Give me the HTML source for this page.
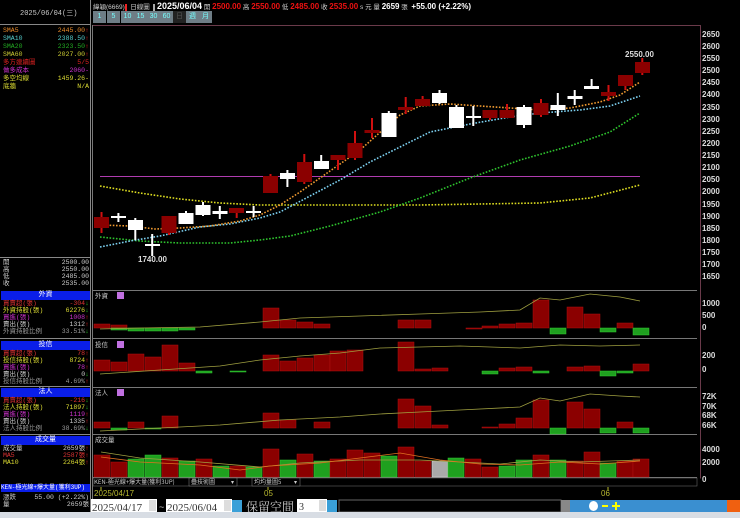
<!DOCTYPE html>
<html><head><meta charset="utf-8"><style>
*{margin:0;padding:0;box-sizing:border-box}
body{width:740px;height:518px;background:#000;overflow:hidden;position:relative;font-family:"Liberation Mono","Noto Sans CJK TC",monospace;font-size:7px;color:#ddd}
.a{position:absolute}
.row{position:absolute;left:3px;width:86px;height:8px;line-height:8px;font-size:6.5px}
.row b{position:absolute;right:0;font-weight:normal}
.hd{position:absolute;left:1px;width:89px;height:9px;background:#0a1ee8;color:#fff;text-align:center;font-size:7px;line-height:9px}
.btn{position:absolute;top:11px;height:12px;width:13px;background:#6e7d86;color:#7ff;font-size:7px;text-align:center;line-height:12px;font-family:"Liberation Sans",sans-serif}
</style></head><body>
<!-- left panel -->
<div class="a" style="left:0;top:0;width:91px;height:518px;border-right:1px solid #888"></div>
<div class="a" style="left:0;top:24px;width:91px;height:1px;background:#888"></div>
<div class="a" style="left:20px;top:8px;font-size:7px;color:#ccc">2025/06/04(三)</div>
<div class="row" style="top:27px;color:#e88a2a">SMA5<b>2445.00<span style="color:#f22">↑</span></b></div>
<div class="row" style="top:35px;color:#5cc">SMA10<b>2388.50<span style="color:#f22">↑</span></b></div>
<div class="row" style="top:43px;color:#2a2">SMA20<b>2323.50<span style="color:#f22">↑</span></b></div>
<div class="row" style="top:51px;color:#cc3">SMA60<b>2027.00<span style="color:#f22">↑</span></b></div>
<div class="row" style="top:59px;color:#d22">多方連續圖<b>5/5</b></div>
<div class="row" style="top:67px;color:#c3c">做多成本<b>2060-</b></div>
<div class="row" style="top:75px;color:#dd3">多空均線<b>1459.26-</b></div>
<div class="row" style="top:83px;color:#dd3">底牆<b>N/A</b></div>
<div class="a" style="left:0;top:257px;width:91px;height:1px;background:#888"></div>
<div class="row" style="top:259px;color:#ccc">開<b>2500.00</b></div>
<div class="row" style="top:266px;color:#ccc">高<b>2550.00</b></div>
<div class="row" style="top:273px;color:#ccc">低<b>2485.00</b></div>
<div class="row" style="top:280px;color:#ccc">收<b>2535.00</b></div>
<div class="hd" style="top:291px">外資</div>
<div class="row" style="top:300px;color:#d33">買賣超(張)<b>-304<span style="color:#2c2">↓</span></b></div>
<div class="row" style="top:307px;color:#dd3">外資持股(張)<b>62276<span style="color:#2c2">↓</span></b></div>
<div class="row" style="top:314px;color:#c3c">買進(張)<b>1008<span style="color:#f22">↑</span></b></div>
<div class="row" style="top:321px;color:#ccc">賣出(張)<b>1312<span style="color:#f22">↑</span></b></div>
<div class="row" style="top:328px;color:#999">外資持股比例<b>33.51%<span style="color:#2c2">↓</span></b></div>
<div class="a" style="left:0;top:338px;width:91px;height:1px;background:#888"></div>
<div class="hd" style="top:341px">投信</div>
<div class="row" style="top:350px;color:#d33">買賣超(張)<b>78<span style="color:#f22">↑</span></b></div>
<div class="row" style="top:357px;color:#dd3">投信持股(張)<b>8724<span style="color:#f22">↑</span></b></div>
<div class="row" style="top:364px;color:#c3c">買進(張)<b>78<span style="color:#f22">↑</span></b></div>
<div class="row" style="top:371px;color:#ccc">賣出(張)<b>0<span style="color:#2c2">↓</span></b></div>
<div class="row" style="top:378px;color:#999">投信持股比例<b>4.69%<span style="color:#f22">↑</span></b></div>
<div class="a" style="left:0;top:386px;width:91px;height:1px;background:#888"></div>
<div class="hd" style="top:388px">法人</div>
<div class="row" style="top:397px;color:#d33">買賣超(張)<b>-216<span style="color:#2c2">↓</span></b></div>
<div class="row" style="top:404px;color:#dd3">法人持股(張)<b>71897<span style="color:#2c2">↓</span></b></div>
<div class="row" style="top:411px;color:#c3c">買進(張)<b>1119<span style="color:#f22">↑</span></b></div>
<div class="row" style="top:418px;color:#ccc">賣出(張)<b>1335<span style="color:#f22">↑</span></b></div>
<div class="row" style="top:425px;color:#999">法人持股比例<b>38.69%<span style="color:#2c2">↓</span></b></div>
<div class="a" style="left:0;top:434px;width:91px;height:1px;background:#888"></div>
<div class="hd" style="top:436px">成交量</div>
<div class="row" style="top:445px;color:#ccc">成交量<b>2659張<span style="color:#f22">↑</span></b></div>
<div class="row" style="top:452px;color:#d33">MA5<b>2587張<span style="color:#f22">↑</span></b></div>
<div class="row" style="top:459px;color:#dd3">MA10<b>2264張<span style="color:#f22">↑</span></b></div>
<div class="hd" style="top:484px;height:8px;line-height:8px;font-size:6px;text-align:left">KEN-極光線+爆大量(獲利3UP)</div>
<div class="row" style="top:494px;color:#ccc">漲跌<b>55.00 (+2.22%)</b></div>
<div class="row" style="top:501px;color:#ccc">量<b>2659張</b></div>

<!-- top bar -->
<div class="a" style="left:93px;top:1px;font-size:6.5px;color:#ccc;white-space:nowrap;font-family:'Liberation Sans','Noto Sans CJK TC',sans-serif">緯穎(6669)<span style="background:#e22;color:#fff">&nbsp;</span>&nbsp;&nbsp;日線圖&nbsp;&nbsp;<span style="background:#aaa">&nbsp;</span> <b style="font-size:9px;color:#fff">2025/06/04</b> 開 <b style="font-size:8px;color:#e11">2500.00</b> 高 <b style="font-size:8px;color:#e11">2550.00</b> 低 <b style="font-size:8px;color:#e11">2485.00</b> 收 <b style="font-size:8px;color:#e11">2535.00</b> s 元 量 <b style="font-size:8px;color:#fff">2659</b> 張 &nbsp;<b style="font-size:8px;color:#fff">+55.00 (+2.22%)</b></div>
<div class="btn" style="left:93px">1</div><div class="btn" style="left:107px">5</div><div class="btn" style="left:121px">10</div><div class="btn" style="left:134px">15</div><div class="btn" style="left:147px">30</div><div class="btn" style="left:160px">60</div><div class="btn" style="left:173px;background:#222;color:#555">日</div><div class="btn" style="left:186px">週</div><div class="btn" style="left:199px">月</div>

<svg class="a" style="left:0;top:0" width="740" height="518" font-family="Liberation Sans,sans-serif">
<!-- frames -->
<g fill="none" stroke="#777" stroke-width="1">
<path d="M92.5 25.5H700.5V478.5" stroke="#6a3a4a"/>
<path d="M92.5 290.5H697M92.5 338.5H697M92.5 387.5H697M92.5 434.5H697M92.5 477.5H697"/>
<path d="M92.5 25V518"/>
</g>
<!-- y labels -->
<g fill="#ddd" font-size="8" font-weight="bold">
<text x="702" y="37">2650</text><text x="702" y="49">2600</text><text x="702" y="61">2550</text><text x="702" y="73">2500</text><text x="702" y="85">2450</text><text x="702" y="97">2400</text><text x="702" y="110">2350</text><text x="702" y="122">2300</text><text x="702" y="134">2250</text><text x="702" y="146">2200</text><text x="702" y="158">2150</text><text x="702" y="170">2100</text><text x="702" y="182">2050</text><text x="702" y="194">2000</text><text x="702" y="207">1950</text><text x="702" y="219">1900</text><text x="702" y="231">1850</text><text x="702" y="243">1800</text><text x="702" y="255">1750</text><text x="702" y="267">1700</text><text x="702" y="279">1650</text>
<text x="702" y="306">1000</text><text x="702" y="318">500</text><text x="702" y="330">0</text>
<text x="702" y="358">200</text><text x="702" y="372">0</text>
<text x="702" y="399">72K</text><text x="702" y="409">70K</text><text x="702" y="418">68K</text><text x="702" y="428">66K</text>
<text x="702" y="452">4000</text><text x="702" y="465">2000</text><text x="702" y="482">0</text>
<text x="625" y="57">2550.00</text><text x="138" y="262">1740.00</text>
</g>
<!-- horizontal magenta -->
<line x1="100" y1="176.5" x2="640" y2="176.5" stroke="#b03cb0" stroke-width="1"/>
<!-- MAs -->
<g fill="none" stroke-width="1.6" stroke-dasharray="1.6 1.6">
<polyline stroke="#dddd20" points="100,186 140,193 180,199 220,203 260,205 320,205 380,205 420,205 480,204 540,203 590,198 640,185"/>
<polyline stroke="#2ec42e" points="100,237 140,241 180,243 230,243 260,240 290,236 330,226 380,212 420,198 470,178 520,160 570,146 610,132 640,113"/>
<polyline stroke="#7cd0f0" points="100,247 130,241 160,236 200,227 230,224 260,218 280,212 310,196 340,180 370,162 400,147 430,132 470,124 510,117 540,113 580,110 610,106 640,96"/>
<polyline stroke="#f09a30" points="100,225 130,226 155,229 180,228 210,226 240,221 260,215 280,205 300,192 330,171 360,150 385,128 400,115 420,106 450,104 480,106 510,108 540,110 570,108 600,102 620,95 640,82"/>
</g>
<!-- candles -->
<g stroke-width="2">
<g stroke="#d01010" fill="#8b0000">
<line x1="101.5" y1="212" x2="101.5" y2="233"/><rect x="94" y="217" width="15" height="11" stroke="none"/>
<line x1="169" y1="216" x2="169" y2="235"/><rect x="161.5" y="216" width="15" height="17" stroke="none"/>
<line x1="236.7" y1="208" x2="236.7" y2="218"/><rect x="229" y="208" width="15" height="5" stroke="none"/>
<line x1="270.5" y1="174" x2="270.5" y2="193"/><rect x="263" y="176" width="15" height="17" stroke="none"/>
<line x1="304.3" y1="154" x2="304.3" y2="184"/><rect x="297" y="162" width="15" height="20" stroke="none"/>
<line x1="338" y1="155" x2="338" y2="170"/><rect x="330.5" y="155" width="15" height="5" stroke="none"/>
<line x1="355" y1="131" x2="355" y2="160"/><rect x="347.5" y="143" width="15" height="15" stroke="none"/>
<line x1="372" y1="118" x2="372" y2="138"/><rect x="364.5" y="130" width="15" height="3" stroke="none"/>
<line x1="405.7" y1="97" x2="405.7" y2="114"/><rect x="398" y="107" width="15" height="3" stroke="none"/>
<line x1="422.6" y1="96" x2="422.6" y2="106"/><rect x="415" y="99" width="15" height="7" stroke="none"/>
<line x1="490" y1="110" x2="490" y2="120"/><rect x="482.5" y="110" width="15" height="8" stroke="none"/>
<line x1="507" y1="104" x2="507" y2="118"/><rect x="499.5" y="110" width="15" height="8" stroke="none"/>
<line x1="541" y1="99" x2="541" y2="117"/><rect x="533.5" y="103" width="15" height="12" stroke="none"/>
<line x1="608.5" y1="85" x2="608.5" y2="101"/><rect x="601" y="92" width="15" height="4" stroke="none"/>
<line x1="625.4" y1="75" x2="625.4" y2="90"/><rect x="618" y="75" width="15" height="11" stroke="none"/>
<line x1="642.3" y1="58" x2="642.3" y2="75"/><rect x="635" y="62" width="15" height="11" stroke="none"/>
</g>
<g stroke="#fff" fill="#fff">
<line x1="118.4" y1="213" x2="118.4" y2="222"/><rect x="111" y="216" width="15" height="2" stroke="none"/>
<line x1="135.3" y1="218" x2="135.3" y2="240"/><rect x="128" y="220" width="15" height="10" stroke="none"/>
<line x1="152.2" y1="234" x2="152.2" y2="256"/><rect x="145" y="244" width="15" height="2" stroke="none"/>
<line x1="186" y1="211" x2="186" y2="224"/><rect x="178.5" y="213" width="15" height="11" stroke="none"/>
<line x1="203" y1="202" x2="203" y2="216"/><rect x="195.5" y="205" width="15" height="10" stroke="none"/>
<line x1="219.8" y1="206" x2="219.8" y2="219"/><rect x="212.5" y="211" width="15" height="3" stroke="none"/>
<line x1="253.6" y1="206" x2="253.6" y2="217"/><rect x="246" y="211" width="15" height="2" stroke="none"/>
<line x1="287.4" y1="170" x2="287.4" y2="187"/><rect x="280" y="173" width="15" height="6" stroke="none"/>
<line x1="321.2" y1="155" x2="321.2" y2="169"/><rect x="314" y="161" width="15" height="8" stroke="none"/>
<line x1="388.8" y1="111" x2="388.8" y2="137"/><rect x="381.5" y="113" width="15" height="24" stroke="none"/>
<line x1="439.5" y1="90" x2="439.5" y2="104"/><rect x="432" y="93" width="15" height="10" stroke="none"/>
<line x1="456.4" y1="105" x2="456.4" y2="128"/><rect x="449" y="107" width="15" height="21" stroke="none"/>
<line x1="473.3" y1="106" x2="473.3" y2="126"/><rect x="466" y="116" width="15" height="2" stroke="none"/>
<line x1="524" y1="105" x2="524" y2="128"/><rect x="516.5" y="107" width="15" height="18" stroke="none"/>
<line x1="557.8" y1="93" x2="557.8" y2="116"/><rect x="550.5" y="105" width="15" height="5" stroke="none"/>
<line x1="574.7" y1="90" x2="574.7" y2="105"/><rect x="567.5" y="96" width="15" height="3" stroke="none"/>
<line x1="591.6" y1="79" x2="591.6" y2="88"/><rect x="584" y="86" width="15" height="3" stroke="none"/>
</g>
</g>
<!-- sub panel titles -->
<g fill="#ccc" font-size="6.5" font-family="Noto Sans CJK TC,sans-serif">
<text x="95" y="298">外資</text><text x="95" y="347">投信</text><text x="95" y="395">法人</text><text x="95" y="442">成交量</text>
</g>
<rect x="117" y="292" width="7" height="7" fill="#c070e0"/><rect x="117" y="341" width="7" height="7" fill="#c070e0"/><rect x="117" y="389" width="7" height="7" fill="#c070e0"/>
<!-- foreign bars zero 328 -->
<g fill="#8b0000" stroke="#b01010" stroke-width=".5">
<rect x="94" y="324" width="16" height="4"/><rect x="111" y="325" width="16" height="3"/><rect x="263" y="308" width="16" height="20"/><rect x="280" y="320" width="16" height="8"/><rect x="297" y="322" width="16" height="6"/><rect x="314" y="324" width="16" height="4"/><rect x="398" y="320" width="16" height="8"/><rect x="415" y="320" width="16" height="8"/><rect x="466" y="328" width="16" height="1"/><rect x="482" y="326" width="16" height="2"/><rect x="499" y="324" width="16" height="4"/><rect x="516" y="323" width="16" height="5"/><rect x="533" y="300" width="16" height="28"/><rect x="567" y="307" width="16" height="21"/><rect x="584" y="314" width="16" height="14"/><rect x="617" y="323" width="16" height="5"/>
</g>
<g fill="#1fa01f" stroke="#3c3" stroke-width=".5">
<rect x="111" y="328" width="16" height="2"/><rect x="128" y="328" width="16" height="3"/><rect x="145" y="328" width="16" height="3"/><rect x="162" y="328" width="16" height="3"/><rect x="179" y="328" width="16" height="2"/><rect x="550" y="328" width="16" height="6"/><rect x="600" y="328" width="16" height="4"/><rect x="633" y="328" width="16" height="7"/>
</g>
<polyline fill="none" stroke="#a0a040" stroke-width=".8" points="100,329 140,328 200,327 260,322 300,318 360,316 420,314 480,312 520,310 540,298 560,300 590,294 620,297 640,301"/>
<!-- invest trust zero 371 -->
<g fill="#8b0000" stroke="#b01010" stroke-width=".5">
<rect x="94" y="360" width="16" height="11"/><rect x="111" y="362" width="16" height="9"/><rect x="128" y="354" width="16" height="17"/><rect x="145" y="357" width="16" height="14"/><rect x="162" y="345" width="16" height="26"/><rect x="179" y="363" width="16" height="8"/><rect x="263" y="355" width="16" height="16"/><rect x="280" y="361" width="16" height="10"/><rect x="297" y="358" width="16" height="13"/><rect x="314" y="355" width="16" height="16"/><rect x="330" y="351" width="16" height="20"/><rect x="347" y="350" width="16" height="21"/><rect x="398" y="342" width="16" height="29"/><rect x="415" y="369" width="16" height="2"/><rect x="432" y="368" width="16" height="3"/><rect x="499" y="368" width="16" height="3"/><rect x="516" y="367" width="16" height="4"/><rect x="567" y="367" width="16" height="4"/><rect x="584" y="366" width="16" height="5"/><rect x="633" y="364" width="16" height="7"/>
</g>
<g fill="#1fa01f" stroke="#3c3" stroke-width=".5">
<rect x="196" y="371" width="16" height="2"/><rect x="230" y="371" width="16" height="1"/><rect x="499" y="371" width="0" height="0"/><rect x="482" y="371" width="16" height="3"/><rect x="499" y="371" width="16" height="0"/><rect x="533" y="371" width="16" height="2"/><rect x="600" y="371" width="16" height="5"/><rect x="617" y="371" width="16" height="2"/>
</g>
<polyline fill="none" stroke="#a0a040" stroke-width=".8" points="100,374 160,370 220,366 260,360 300,356 340,353 380,348 420,347 460,346 520,348 560,345 600,346 640,345"/>
<!-- institutions zero 428 -->
<g fill="#8b0000" stroke="#b01010" stroke-width=".5">
<rect x="94" y="422" width="16" height="6"/><rect x="128" y="422" width="16" height="6"/><rect x="162" y="416" width="16" height="12"/><rect x="263" y="413" width="16" height="15"/><rect x="280" y="420" width="16" height="8"/><rect x="314" y="422" width="16" height="6"/><rect x="398" y="399" width="16" height="29"/><rect x="415" y="406" width="16" height="22"/><rect x="432" y="425" width="16" height="3"/><rect x="482" y="427" width="16" height="1"/><rect x="499" y="424" width="16" height="4"/><rect x="516" y="418" width="16" height="10"/><rect x="533" y="400" width="16" height="28"/><rect x="567" y="402" width="16" height="26"/><rect x="584" y="409" width="16" height="19"/><rect x="617" y="422" width="16" height="6"/>
</g>
<g fill="#1fa01f" stroke="#3c3" stroke-width=".5">
<rect x="111" y="428" width="16" height="2"/><rect x="145" y="428" width="16" height="1"/><rect x="550" y="428" width="16" height="6"/><rect x="600" y="428" width="16" height="5"/><rect x="633" y="428" width="16" height="5"/>
</g>
<polyline fill="none" stroke="#a0a040" stroke-width=".8" points="100,431 160,428 220,425 280,420 340,417 380,414 420,412 460,410 520,407 540,398 560,401 590,394 620,396 640,397"/>
<!-- volume base 477 -->
<g stroke-width=".5">
<rect x="94" y="455" width="16" height="22" fill="#8b0000" stroke="#b01010"/>
<rect x="111" y="462" width="16" height="15" fill="#8b0000" stroke="#b01010"/>
<rect x="128" y="459" width="16" height="18" fill="#1fa01f" stroke="#3c3"/>
<rect x="145" y="455" width="16" height="22" fill="#1fa01f" stroke="#3c3"/>
<rect x="162" y="458" width="16" height="19" fill="#8b0000" stroke="#b01010"/>
<rect x="179" y="461" width="16" height="16" fill="#1fa01f" stroke="#3c3"/>
<rect x="196" y="459" width="16" height="18" fill="#8b0000" stroke="#b01010"/>
<rect x="213" y="466" width="16" height="11" fill="#1fa01f" stroke="#3c3"/>
<rect x="230" y="466" width="16" height="11" fill="#8b0000" stroke="#b01010"/>
<rect x="246" y="467" width="16" height="10" fill="#1fa01f" stroke="#3c3"/>
<rect x="263" y="449" width="16" height="28" fill="#8b0000" stroke="#b01010"/>
<rect x="280" y="460" width="16" height="17" fill="#1fa01f" stroke="#3c3"/>
<rect x="297" y="454" width="16" height="23" fill="#8b0000" stroke="#b01010"/>
<rect x="314" y="461" width="16" height="16" fill="#1fa01f" stroke="#3c3"/>
<rect x="330" y="459" width="16" height="18" fill="#8b0000" stroke="#b01010"/>
<rect x="347" y="450" width="16" height="27" fill="#8b0000" stroke="#b01010"/>
<rect x="364" y="453" width="16" height="24" fill="#8b0000" stroke="#b01010"/>
<rect x="381" y="456" width="16" height="21" fill="#1fa01f" stroke="#3c3"/>
<rect x="398" y="447" width="16" height="30" fill="#8b0000" stroke="#b01010"/>
<rect x="415" y="461" width="16" height="16" fill="#8b0000" stroke="#b01010"/>
<rect x="432" y="461" width="16" height="16" fill="#aaa" stroke="#ddd"/>
<rect x="448" y="458" width="16" height="19" fill="#1fa01f" stroke="#3c3"/>
<rect x="465" y="459" width="16" height="18" fill="#8b0000" stroke="#b01010"/>
<rect x="482" y="467" width="16" height="10" fill="#8b0000" stroke="#b01010"/>
<rect x="499" y="466" width="16" height="11" fill="#1fa01f" stroke="#3c3"/>
<rect x="516" y="460" width="16" height="17" fill="#1fa01f" stroke="#3c3"/>
<rect x="533" y="455" width="16" height="22" fill="#8b0000" stroke="#b01010"/>
<rect x="550" y="460" width="16" height="17" fill="#1fa01f" stroke="#3c3"/>
<rect x="567" y="461" width="16" height="16" fill="#8b0000" stroke="#b01010"/>
<rect x="584" y="452" width="16" height="25" fill="#8b0000" stroke="#b01010"/>
<rect x="600" y="463" width="16" height="14" fill="#1fa01f" stroke="#3c3"/>
<rect x="617" y="461" width="16" height="16" fill="#8b0000" stroke="#b01010"/>
<rect x="633" y="459" width="16" height="18" fill="#8b0000" stroke="#b01010"/>
</g>
<polyline fill="none" stroke="#a0a040" stroke-width=".8" points="101,452 140,458 200,462 260,467 300,463 360,460 420,460 460,462 500,464 540,460 580,462 640,460"/>
<polyline fill="none" stroke="#e07020" stroke-width=".8" points="101,457 140,462 200,465 240,470 270,466 320,463 360,458 400,453 440,460 480,464 520,465 560,462 600,464 640,461"/>
<!-- indicator row -->
<rect x="93" y="478" width="604" height="8" fill="#000" stroke="#777" stroke-width=".5"/>
<g font-size="6" fill="#ccc" font-family="Noto Sans CJK TC,sans-serif">
<text x="94" y="484">KEN-極光線+爆大量(獲利3UP)</text>
<rect x="189" y="478" width="48" height="8" fill="#000" stroke="#888" stroke-width=".5"/><text x="191" y="484">疊技術圖</text><text x="231" y="484">▾</text>
<rect x="252" y="478" width="48" height="8" fill="#000" stroke="#888" stroke-width=".5"/><text x="254" y="484">均均量圖5</text><text x="294" y="484">▾</text>
</g>
<g fill="#b8b830" font-size="8"><text x="94" y="496">2025/04/17</text><text x="264" y="496">05</text><text x="601" y="496">06</text></g>
<path d="M101 487v3M268 487v3M608 487v3" stroke="#b8b830"/>
<!-- input row -->
<rect x="91" y="499" width="66" height="13" fill="#fff"/><text x="92" y="511" font-family="Liberation Serif,serif" font-size="11" fill="#333">2025/04/17</text><rect x="149" y="500" width="7" height="11" fill="#ddd"/>
<text x="159" y="510" fill="#ccc" font-size="9">~</text>
<rect x="166" y="499" width="66" height="13" fill="#fff"/><text x="167" y="511" font-family="Liberation Serif,serif" font-size="11" fill="#333">2025/06/04</text><rect x="224" y="500" width="7" height="11" fill="#ddd"/>
<rect x="232" y="500" width="10" height="12" fill="#3aa0d8"/>
<text x="246" y="511" fill="#ccc" font-size="12" font-family="Noto Serif CJK SC,serif">保留空間</text>
<rect x="297" y="499" width="30" height="13" fill="#fff"/><text x="299" y="510" fill="#333" font-size="10" font-family="Liberation Serif,serif">3</text><rect x="319" y="500" width="7" height="11" fill="#ddd"/>
<rect x="327" y="500" width="10" height="12" fill="#3aa0d8"/>
<rect x="339" y="500" width="222" height="12" fill="#000" stroke="#666"/>
<rect x="561" y="500" width="9" height="12" fill="#888"/>
<rect x="570" y="500" width="170" height="12" fill="#3a8fd0"/>
<rect x="589" y="501" width="9" height="10" rx="5" fill="#fff"/>
<rect x="602" y="505" width="6" height="2" fill="#ff0"/><path d="M616 502v8M612 506h8" stroke="#ff0" stroke-width="2"/>
<rect x="727" y="500" width="13" height="12" fill="#f06010"/>
<rect x="0" y="512" width="740" height="6" fill="#d8dde4"/>
</svg>
</body></html>
